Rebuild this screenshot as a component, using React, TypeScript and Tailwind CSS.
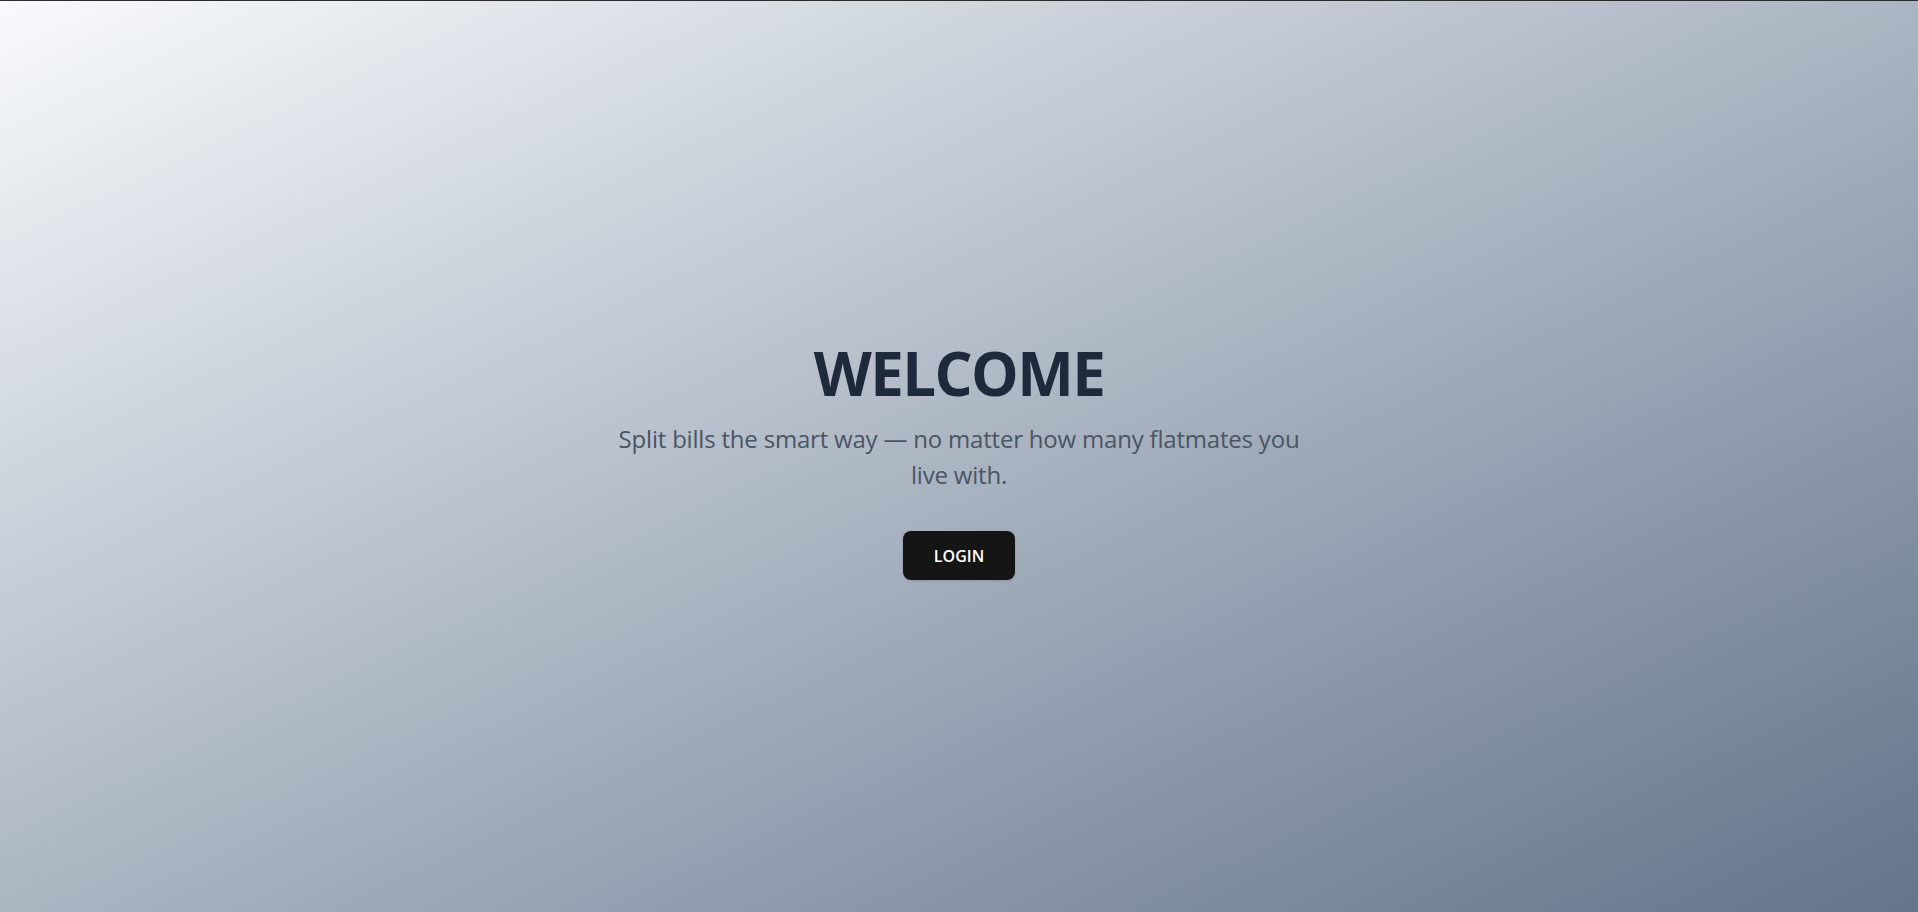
export default function App() {
  return (
    <div
      className="min-h-screen w-full border-t border-[#2b2b2b] bg-gradient-to-br from-[#f8fafc] to-[#64748b] flex flex-col items-center justify-center text-center"
      style={{ fontFamily: '"Open Sans", "Noto Sans", sans-serif' }}
    >
      <div className="flex flex-col items-center pt-[10px]">
        <h1 className="text-[60px] leading-[60px] font-bold tracking-[-1.6px] text-[#1e293b]">WELCOME</h1>
        <p className="mt-[18px] max-w-[700px] text-[24px] leading-[36px] tracking-[-0.2px] text-[#4b5563]">
          Split bills the smart way — no matter how many flatmates you live with.
        </p>
        <button className="mt-[38px] h-[49px] w-[112px] rounded-lg bg-[#151515] text-white text-[16px] font-semibold shadow-sm">
          LOGIN
        </button>
      </div>
    </div>
  );
}
